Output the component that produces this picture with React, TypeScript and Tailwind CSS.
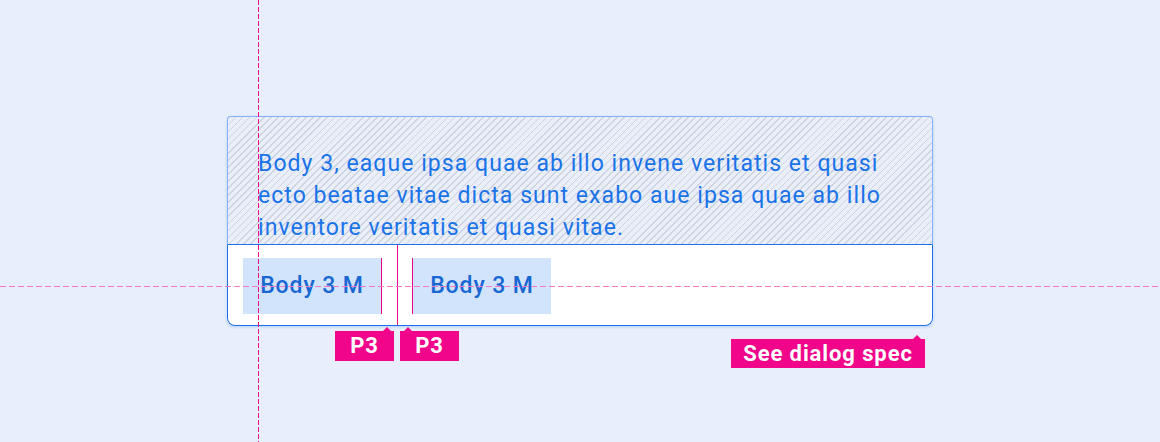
import React from "react";

function Tag({ label, className, notchLeft }: { label: string; className: string; notchLeft: number }) {
  return (
    <div className={`absolute bg-[#f0058b] text-white font-bold text-[22px] leading-none tracking-[0.9px] flex items-center justify-center ${className}`}>
      <span
        className="absolute -top-[4px] w-0 h-0 border-l-[4px] border-r-[4px] border-b-[4px] border-l-transparent border-r-transparent border-b-[#f0058b]"
        style={{ left: notchLeft - 4 }}
      />
      {label}
    </div>
  );
}

export default function App() {
  return (
    <div
      className="relative w-[1160px] h-[442px] overflow-hidden bg-[#e8eefb] pt-[116px] pl-[227px]"
      style={{ fontFamily: "Roboto, 'Noto Sans', sans-serif" }}
    >
      <div className="relative w-[706px] flex flex-col rounded-[6px] shadow-[0_1px_3px_rgba(26,115,232,0.25)]">
        {/* body copy area, hatched */}
        <div className="h-[129px] border border-[#86b0f4] border-b-[#1a73e8] rounded-t-[4px] bg-[#e9eef9] bg-[repeating-linear-gradient(135deg,#cdd3df_0px,#cdd3df_1.2px,transparent_1.2px,transparent_5px)] pl-[30px] pt-[31px]">
          <p className="text-[#1a73e8] text-[23px] leading-[32px] tracking-[1.05px]">
            <span className="block whitespace-nowrap">Body 3, eaque ipsa quae ab illo invene veritatis et quasi</span>
            <span className="block whitespace-nowrap">ecto beatae vitae dicta sunt exabo aue ipsa quae ab illo</span>
            <span className="block whitespace-nowrap">inventore veritatis et quasi vitae.</span>
          </p>
        </div>
        {/* action row */}
        <div className="h-[81px] flex bg-white border-x border-b border-[#1a73e8] rounded-b-[8px] pl-[15px]">
          <div className="self-start mt-[13px] h-[56px] w-[139px] bg-[#d2e3fc] border-r border-[#f0058b] flex items-center justify-center text-[#1967d2] text-[23px] font-medium tracking-[0.9px]">
            Body 3 M
          </div>
          <div className="w-[15px]" />
          <div className="w-px bg-[#f0058b]" />
          <div className="w-[14px]" />
          <div className="self-start mt-[13px] h-[56px] w-[139px] bg-[#d2e3fc] border-l border-[#f0058b] flex items-center justify-center text-[#1967d2] text-[23px] font-medium tracking-[0.9px]">
            Body 3 M
          </div>
        </div>

        {/* spec callouts */}
        <Tag label="P3" className="left-[108px] top-[215px] w-[59px] h-[30px]" notchLeft={52} />
        <Tag label="P3" className="left-[173px] top-[215px] w-[59px] h-[30px]" notchLeft={8} />
        <Tag label="See dialog spec" className="left-[504px] top-[223px] w-[194px] h-[29px]" notchLeft={186} />
      </div>

      {/* keyline guides */}
      <div className="absolute left-[258px] top-0 w-px h-full bg-[repeating-linear-gradient(180deg,#f0058b_0px,#f0058b_5px,transparent_5px,transparent_7px)]" />
      <div className="absolute left-0 top-[286px] h-px w-full bg-[repeating-linear-gradient(90deg,#f27ac0_0px,#f27ac0_6px,transparent_6px,transparent_9px)]" />
    </div>
  );
}
